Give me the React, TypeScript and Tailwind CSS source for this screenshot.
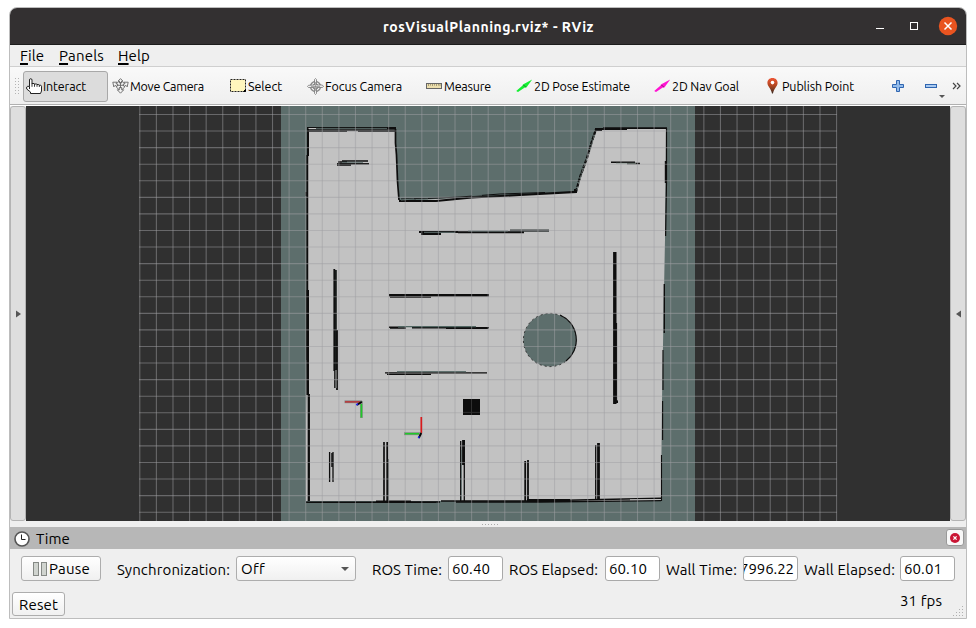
import { ReactNode, useLayoutEffect, useRef, useState } from "react";
import clsx from "clsx";

/* Text run whose tracking is adjusted so that it fills a fixed advance width. */
function Label({ w, className, children }: { w: number; className?: string; children: ReactNode }) {
  const ref = useRef<HTMLSpanElement>(null);
  const [spacing, setSpacing] = useState(0);
  useLayoutEffect(() => {
    const el = ref.current;
    if (!el) return;
    const count = (el.textContent ?? "").length;
    setSpacing((w - el.getBoundingClientRect().width) / count);
  }, [w]);
  return (
    <span className={clsx("block shrink-0 whitespace-nowrap", className)} style={{ width: w }}>
      <span ref={ref} style={{ letterSpacing: spacing }}>
        {children}
      </span>
    </span>
  );
}

function HandIcon() {
  return (
    <svg width="17" height="17" viewBox="0 0 17 17" className="shrink-0">
      <path
        d="M3.5 8.5V2Q3.5 .7 4.7 .7T6 2V5.5H8.2L8.7 6H10.4L11 6.5H12.7L13.3 7.2H14.8L15.5 8.2V13L14.5 15.5H4.5V14L.7 11V9Q1.4 7.8 3.5 8.5V11"
        fill="#fff" stroke="#222" strokeWidth="1"
      />
      <path d="M6 5V8.8M8.5 6V8.8M11 6.5V8.8M13.3 7V9" stroke="#222" strokeWidth=".9" fill="none" />
    </svg>
  );
}

function MoveIcon() {
  return (
    <svg width="17" height="16" viewBox="0 0 17 16" className="shrink-0" fill="#f4f4f4" stroke="#666" strokeWidth=".9">
      <circle cx="8.5" cy="7.5" r="4.2" />
      <path d="M8.5 .6L11 3.2H9.5V5H7.5V3.2H6ZM8.5 15.2L5.3 11.8H7.3V9.5H9.7V11.8H11.7Z" />
      <path d="M.8 4.2L5 4.2 4 5.5 6 6.7 5 8.5 3 7.4 1.8 8.9ZM16.2 4.2L12 4.2 13 5.5 11 6.7 12 8.5 14 7.4 15.2 8.9Z" />
      <path d="M5.3 7.3H11.7M8.5 4V10.2" fill="none" />
    </svg>
  );
}

function SelectIcon() {
  return (
    <svg width="17" height="14" viewBox="0 0 17 14" className="shrink-0">
      <rect x=".5" y=".5" width="15" height="12" fill="#fff6bd" stroke="#222" strokeDasharray="2 1" />
      <path d="M15.5 10.5V12.5H13.5Z" fill="#000" stroke="#000" />
    </svg>
  );
}

function FocusIcon() {
  return (
    <svg width="17" height="17" viewBox="0 0 17 17" className="shrink-0" fill="none" stroke="#777" strokeWidth="1">
      <circle cx="8.5" cy="8.5" r="5" stroke="#888" strokeWidth="1.3" />
      <circle cx="8.5" cy="8.5" r="2.7" />
      <path d="M7.5 7V1.5L8.5 .5 9.5 1.5V7H15.3L16.5 8.5 15.3 9.5H9.5V15.5L8.5 16.5 7.5 15.5V9.5H1.5L.5 8.5 1.5 7.3Z" fill="#eee" stroke="#777" strokeWidth=".8" />
      <path d="M4 8.5H13M8.5 4V13" strokeWidth=".6" />
    </svg>
  );
}

function RulerIcon() {
  return (
    <svg width="16" height="6" viewBox="0 0 16 6" className="shrink-0">
      <rect x=".5" y=".5" width="15" height="5" fill="#ecdfae" stroke="#666" />
      <path d="M2.5 1V3M4.5 1V2.6M6.5 1V3M8.5 1V2.6M10.5 1V3M12.5 1V2.6M14 1V3" stroke="#887f60" strokeWidth=".7" />
    </svg>
  );
}

function ArrowIcon({ color }: { color: string }) {
  return (
    <svg width="17" height="14" viewBox="0 0 17 14" className="shrink-0">
      <path d="M.2 12L6.6 6.6 6.9 5.4 16.2 .4 10.4 8.6 8.8 8.4 2 13Z" fill={color} />
      <path d="M7.5 6L8.6 7.2 9.8 8" stroke="#222" strokeOpacity=".65" strokeWidth=".9" fill="none" />
    </svg>
  );
}

function PinIcon() {
  return (
    <svg width="11" height="16" viewBox="0 0 11 16" className="shrink-0">
      <defs>
        <linearGradient id="pin" x1="0" y1="0" x2="0" y2="1">
          <stop offset="0" stopColor="#ee5736" />
          <stop offset=".5" stopColor="#b04520" />
          <stop offset="1" stopColor="#3b2b22" />
        </linearGradient>
      </defs>
      <path d="M5.5 0C2.2 0 .4 2.3 .4 5 .4 8.3 4.4 11 5 15.6H6C6.6 11 10.6 8.3 10.6 5 10.6 2.3 8.8 0 5.5 0Z" fill="url(#pin)" />
      <circle cx="5.5" cy="4.6" r="1.8" fill="#fff" />
    </svg>
  );
}

function Tool({ icon, gap, w, text, width, active }: { icon: ReactNode; gap: number; w: number; text: string; width: number; active?: boolean }) {
  return (
    <div
      className={clsx(
        "flex h-[31px] shrink-0 items-center text-[12.5px] leading-[16px]",
        active && "rounded-[3px] border border-[#a8a8a8] bg-[#dcdcdc]",
        active ? "pl-[2px]" : "pl-[3px]",
      )}
      style={{ width, columnGap: gap }}
    >
      {icon}
      <Label w={w} className="pb-px">{text}</Label>
    </div>
  );
}

const GRID_X = Array.from({ length: 43 }, (_, i) => 139.8 + i * 16.59);
const GRID_Y = Array.from({ length: 25 }, (_, i) => 114.5 + i * 16.57);

const floor =
  "M308 129H395L399 201 576 192 597 129H666L665 240 664 290 662 400 661 501H306V420L307 350V190Z";

function MapView() {
  return (
    <svg width="924" height="415" viewBox="26 106 924 415" className="block shrink-0">
      <rect x="26" y="106" width="924" height="415" fill="#303030" />
      <rect x="281" y="106" width="414" height="415" fill="#5d6e6c" />
      <path d={floor} fill="#c2c2c2" />
      <circle cx="550" cy="340" r="26.6" fill="#5d6e6c" stroke="#222" strokeWidth=".9" strokeDasharray="2 3" />
      <path d="M566 318A27.2 27.2 0 0 1 566 362" fill="none" stroke="#c2c2c2" strokeWidth="1.4" />
      <path d="M560 315A27 27 0 0 1 566 361" fill="none" stroke="#0c0c0c" strokeWidth="1.2" />

      {/* outer walls */}
      <g fill="none" stroke="#0d0d0d">
        <path d="M307 128.5H396" strokeWidth="3" />
        <path d="M308 130.5H395" strokeWidth="3" stroke="#303232" />
        <path d="M316 128.4H387" strokeWidth=".9" stroke="#5f706e" />
        <path d="M308.5 128.5H316M347 131.4H358" strokeWidth="1" stroke="#c3c3c3" />
        <path d="M395.5 129V143L396.5 155 397.5 181 399 200" strokeWidth="1.7" />
        <path d="M308 129V156" strokeWidth="2" />
        <path d="M307.3 155V360" strokeWidth="1.9" />
        <path d="M307.7 290V395" strokeWidth="2.6" />
        <path d="M308.8 394V501" strokeWidth="2.3" />
        <path d="M306.2 192V196" strokeWidth="1.5" />
        <path d="M399 201H436L472 197.5 520 195 577 191.8" strokeWidth="2.2" />
        <path d="M401 199L427 198.5 460 197 500 194 545 192.5" strokeWidth="1" />
        <path d="M401 200L414 199M416 199.5L428 199M472 195.5L482 195" stroke="#5f706e" strokeWidth="1" />
        <path d="M576 192L580 177 587 158 592 141 596 129" strokeWidth="2.2" strokeDasharray="4 1" />
        <path d="M577 190L583 169 590 151 595 133" strokeWidth=".8" stroke="#7c8583" strokeDasharray="4 2" />
        <path d="M575 189V193M595 130H602" strokeWidth="2" />
        <path d="M595 129H627" strokeWidth="2" />
        <path d="M603 128.2H667" strokeWidth="1.7" />
        <path d="M666.5 128V182L665.6 236" strokeWidth="1.2" />
        <path d="M665.5 161V183M664.3 284V333" strokeWidth="1.4" />
        <path d="M663 350V390M662.6 401V440M661.5 455V501" strokeWidth="1.1" />
        <path d="M306 502.3H436M376 501.3H411M411 502H440M441 501H530L661 498.2" strokeWidth="1.6" />
        <path d="M456 502H540L661 500.6" strokeWidth="1.3" />
        <path d="M527 500.5H570" strokeWidth="2.8" />
        <path d="M630 499.7L660 499.5" stroke="#c3c3c3" strokeWidth=".9" />
      </g>

      {/* inner obstacles */}
      <g fill="none" stroke="#0d0d0d">
        <path d="M338 162H347M342 161H368M337 163.8H369M337 165H351" strokeWidth="1.4" />
        <path d="M342 162.3H363" stroke="#5f706e" strokeWidth="1" />
        <path d="M611 162.3H635M627 163.4H640" strokeWidth="1.5" />
        <path d="M616 163.3H636" stroke="#8a9a93" strokeWidth=".8" />
        <path d="M419 232H458M421 234H441M458 232.3H524" strokeWidth="1.9" />
        <path d="M510 230.6H549" stroke="#303636" strokeWidth="2.2" />
        <path d="M424 232.3H455M468 231H508" stroke="#5f706e" strokeWidth="1" />
        <path d="M389 295.2H489" strokeWidth="2.4" />
        <path d="M390 297.2H431" strokeWidth="1.2" />
        <path d="M389 327.3H398M390 328.1H406M412 327.8H489M446 328.3H488" strokeWidth="1.5" />
        <path d="M398 326.7H476" stroke="#526763" strokeWidth="1.2" />
        <path d="M385 372.8H487" strokeWidth="1.3" />
        <path d="M387 374.3H431" strokeWidth="1.2" />
        <path d="M397 371.6H466" stroke="#5f706e" strokeWidth="1.2" />
        <path d="M334.3 269V371" strokeWidth="1.8" />
        <path d="M335.8 270V388" strokeWidth="2" stroke="#161a19" />
        <path d="M334.8 369V388" strokeWidth="1.2" />
        <path d="M337 330V390" strokeWidth="1.8" />
        <path d="M336 370V388" stroke="#c3c3c3" strokeWidth=".9" />
        <path d="M614.8 252V404" strokeWidth="3.4" />
        <path d="M616.6 323V403" strokeWidth="1" />
        <path d="M329.6 452V482M333 452V482" strokeWidth="1.3" />
        <path d="M332 453V467" strokeWidth="1.5" />
        <path d="M384 442V501M387.2 442V501" strokeWidth="1.7" />
        <path d="M388.4 459V501" strokeWidth="1" stroke="#444a49" />
        <path d="M460.7 441V501M464.3 440V501" strokeWidth="1.3" />
        <path d="M463.5 440V465" strokeWidth="2.8" />
        <path d="M461.5 450V500" strokeWidth=".8" stroke="#5f706e" />
        <path d="M525.2 461V501M528 460V499" strokeWidth="1.8" />
        <path d="M595.7 445V499" strokeWidth="1.3" />
        <path d="M598.5 443V499" strokeWidth="2.8" />
        <path d="M615 401.7H618" strokeWidth="2.6" />
      </g>

      <g stroke="#a0a0a4" strokeOpacity=".5" strokeWidth="1.1">
        {GRID_X.map((x) => (
          <path key={x} d={`M${x} 106V521`} />
        ))}
        {GRID_Y.map((y) => (
          <path key={y} d={`M139 ${y}H837`} />
        ))}
      </g>
      <rect x="463" y="399" width="17" height="16" fill="#0d0d0d" />
      <path d="M471.5 399V415M463 412.4H480" stroke="#303030" />

      {/* coordinate frames */}
      <g fill="none">
        <path d="M344.5 401.8H362" stroke="#858585" strokeWidth="2.8" />
        <path d="M345 401.9H360" stroke="#cf191c" strokeWidth="1.1" />
        <path d="M361.4 401V418" stroke="#858f85" strokeWidth="2.8" />
        <path d="M361.4 404V417.5" stroke="#1fc929" strokeWidth="1.6" />
        <path d="M361.8 401.8L357 405" stroke="#050505" strokeWidth="1.9" />
        <path d="M358 403.7L356.3 405.2" stroke="#2020ef" strokeWidth="1.6" />
        <path d="M421.3 417V433" stroke="#d81a1c" strokeWidth="1.7" />
        <path d="M404 433.7H421" stroke="#858f85" strokeWidth="2.9" />
        <path d="M405 433.7H419" stroke="#1fc929" strokeWidth="1.5" />
        <path d="M421.3 433L418.8 438" stroke="#050505" strokeWidth="1.9" />
        <path d="M419.3 436.4L418.3 438.2" stroke="#2020ef" strokeWidth="1.6" />
      </g>
    </svg>
  );
}

function SideHandle({ side }: { side: "left" | "right" }) {
  return (
    <div className="flex h-[415px] w-4 shrink-0 items-center justify-center rounded-[3px] border border-[#b4b4b4] bg-[#dedede]">
      <svg width="5" height="8" viewBox="0 0 5 8">
        <path d={side === "left" ? "M0 .5L5 4 0 7.5Z" : "M5 .5L0 4 5 7.5Z"} fill="#555" />
      </svg>
    </div>
  );
}

function Field({ value, w, clipped }: { value: string; w: number; clipped?: boolean }) {
  return (
    <div
      className={clsx(
        "flex h-[25px] w-[55px] shrink-0 items-center overflow-hidden rounded-[3px] border border-[#a9a9a9] bg-white",
        clipped ? "justify-end pr-[3px]" : "pl-[3px]",
      )}
    >
      <Label w={w}>{value}</Label>
    </div>
  );
}

export default function App() {
  return (
    <div className="h-[628px] w-[976px] overflow-hidden bg-white pl-[9px] pt-[7px] font-['Ubuntu','Noto_Sans',sans-serif] text-[15px] leading-[20px] text-[#000]">
      <div className="flex h-[612px] w-[958px] flex-col overflow-hidden rounded-t-[8px] border border-[#bdbdbd] bg-[#efefef]">
        <header className="flex h-[37px] shrink-0 items-center border-b border-[#1c1c1c] bg-[#333031] pl-[373px] text-white">
          <Label w={211} className="pt-px text-[14px] font-bold">rosVisualPlanning.rviz* - RViz</Label>
          <svg width="90" height="20" viewBox="0 0 90 20" className="ml-[279px]">
            <path d="M3 12.5H11" stroke="#fff" strokeWidth="1" />
            <rect x="37.5" y="6.5" width="7" height="7" fill="none" stroke="#fff" />
            <circle cx="75" cy="10" r="9.2" fill="#e95420" />
            <path d="M71.5 6.5L78.5 13.5M78.5 6.5L71.5 13.5" stroke="#fff" strokeWidth="1.5" />
          </svg>
        </header>

        <nav className="flex h-[22px] shrink-0 items-center border-b border-[#cfcfcf] pl-[10px]">
          <Label w={24} className="mr-[15px]"><u className="decoration-2 underline-offset-2">F</u>ile</Label>
          <Label w={45} className="mr-[14px]"><u className="decoration-2 underline-offset-2">P</u>anels</Label>
          <Label w={32}><u className="decoration-2 underline-offset-2">H</u>elp</Label>
        </nav>

        <div className="flex h-[38px] shrink-0 items-center border-b border-[#b0b0b0] bg-gradient-to-b from-[#f9f9f9] to-[#efefef] pl-[4px] pt-px">
          <svg width="9" height="17" viewBox="0 0 9 17" className="shrink-0">
            {[0, 3, 6, 9, 12, 15].map((y) => (
              <path key={y} d={`M1 ${y}.5h1m2 0h1`} stroke="#b4b4b4" />
            ))}
          </svg>
          <Tool icon={<HandIcon />} gap={0} w={43} text="Interact" width={85} active />
          <div className="w-px shrink-0" />
          <Tool icon={<MoveIcon />} gap={1} w={74} text="Move Camera" width={118} />
          <Tool icon={<SelectIcon />} gap={1} w={34} text="Select" width={77} />
          <Tool icon={<FocusIcon />} gap={1} w={77} text="Focus Camera" width={119} />
          <Tool icon={<RulerIcon />} gap={2} w={47} text="Measure" width={90} />
          <Tool icon={<ArrowIcon color="#14ef32" />} gap={1} w={96} text="2D Pose Estimate" width={138} />
          <Tool icon={<ArrowIcon color="#ff13d2" />} gap={1} w={67} text="2D Nav Goal" width={113} />
          <Tool icon={<PinIcon />} gap={4} w={72} text="Publish Point" width={115} />
          <div className="h-[19px] w-px bg-[#cecece]" />
          <svg width="76" height="24" viewBox="0 0 76 24" className="ml-[11px] shrink-0">
            <path d="M6.5 6.5H9.5V10.5H13.5V13.5H9.5V17.5H6.5V13.5H2.5V10.5H6.5Z" fill="#93bbea" stroke="#2f65b0" />
            <rect x="35.5" y="10.5" width="11" height="3" fill="#a9c9ef" stroke="#2f65b0" />
            <path d="M49 21H55L52 24Z" fill="#555" />
            <path d="M63 9L66 12 63 15M67 9L70 12 67 15" fill="none" stroke="#444" strokeWidth="1.2" />
          </svg>
        </div>

        <main className="flex h-[416px] shrink-0 border-t border-white">
          <SideHandle side="left" />
          <MapView />
          <SideHandle side="right" />
        </main>

        <div className="flex h-[6px] shrink-0 items-center justify-center pl-[6px]">
          <svg width="18" height="1" viewBox="0 0 18 1">
            <path d="M0 .5H18" stroke="#aaa" strokeDasharray="1 2" />
          </svg>
        </div>

        <div className="flex h-[22px] shrink-0 items-center bg-[#b7b7b7] pl-[4px] pr-[2px]">
          <svg width="16" height="16" viewBox="0 0 16 16" className="mt-px">
            <circle cx="8" cy="8" r="7" fill="#fff" stroke="#555" strokeWidth="1.6" />
            <path d="M7.5 3.5V8.5H11.5" fill="none" stroke="#222" />
          </svg>
          <Label w={34} className="ml-[6px] pt-px">Time</Label>
          <div className="mb-px ml-auto flex h-[17px] w-[18px] items-center justify-center rounded-[3px] border border-[#999] bg-[#f8f8f8]">
            <svg width="10" height="10" viewBox="0 0 10 10">
              <circle cx="5" cy="5" r="5" fill="#ca1635" />
              <path d="M3.4 3.4L6.6 6.6M6.6 3.4L3.4 6.6" stroke="#fff" strokeWidth="1.3" />
            </svg>
          </div>
        </div>

        <section className="flex h-[39px] shrink-0 items-center pl-[11px]">
          <button className="flex h-[25px] w-[80px] shrink-0 items-center rounded-[3px] border border-[#adadad] bg-gradient-to-b from-white to-[#f0f0f0] pl-[11px]">
            <svg width="14" height="14" viewBox="0 0 14 14" className="mr-[2px] shrink-0" fill="#d0d4cf" stroke="#858985">
              <rect x=".5" y=".5" width="5" height="13" />
              <rect x="8.5" y=".5" width="5" height="13" />
            </svg>
            <Label w={41}>Pause</Label>
          </button>
          <Label w={113} className="ml-[16px] mr-[6px] pt-[2px]">Synchronization:</Label>
          <div className="mr-[16px] flex h-[25px] w-[120px] shrink-0 items-center rounded-[3px] border border-[#adadad] bg-gradient-to-b from-white to-[#f0f0f0] pl-[4px] pr-[6px]">
            <Label w={24}>Off</Label>
            <svg width="8" height="4" viewBox="0 0 8 4" className="ml-auto"><path d="M0 0H8L4 4Z" fill="#555" /></svg>
          </div>
          <Label w={70} className="mr-[6px] pt-[2px]">ROS Time:</Label>
          <Field value="60.40" w={38} />
          <Label w={89} className="ml-[6px] mr-[7px] pt-[2px]">ROS Elapsed:</Label>
          <Field value="60.10" w={38} />
          <Label w={71} className="ml-[6px] mr-[6px] pt-[2px]">Wall Time:</Label>
          <Field value="7996.22" w={54} clipped />
          <Label w={91} className="ml-[6px] mr-[5px] pt-[2px]">Wall Elapsed:</Label>
          <Field value="60.01" w={38} />
        </section>

        <footer className="flex flex-1 items-start pl-[2px]">
          <button className="mt-[4px] flex h-[24px] w-[53px] items-center rounded-[3px] border border-[#adadad] bg-gradient-to-b from-white to-[#f0f0f0] pl-[6px]">
            <Label w={39} className="pt-px">Reset</Label>
          </button>
          <Label w={42} className="ml-auto mt-[3px]">31 fps</Label>
          <svg width="11" height="11" viewBox="0 0 11 11" className="ml-[11px] mr-[2px] mt-[18px]">
            <path d="M9 .5h1M6 3.5h1M9 3.5h1M3 6.5h1M6 6.5h1M9 6.5h1M0 9.5h1M3 9.5h1M6 9.5h1M9 9.5h1" stroke="#b0b0b0" />
          </svg>
        </footer>
      </div>
    </div>
  );
}
